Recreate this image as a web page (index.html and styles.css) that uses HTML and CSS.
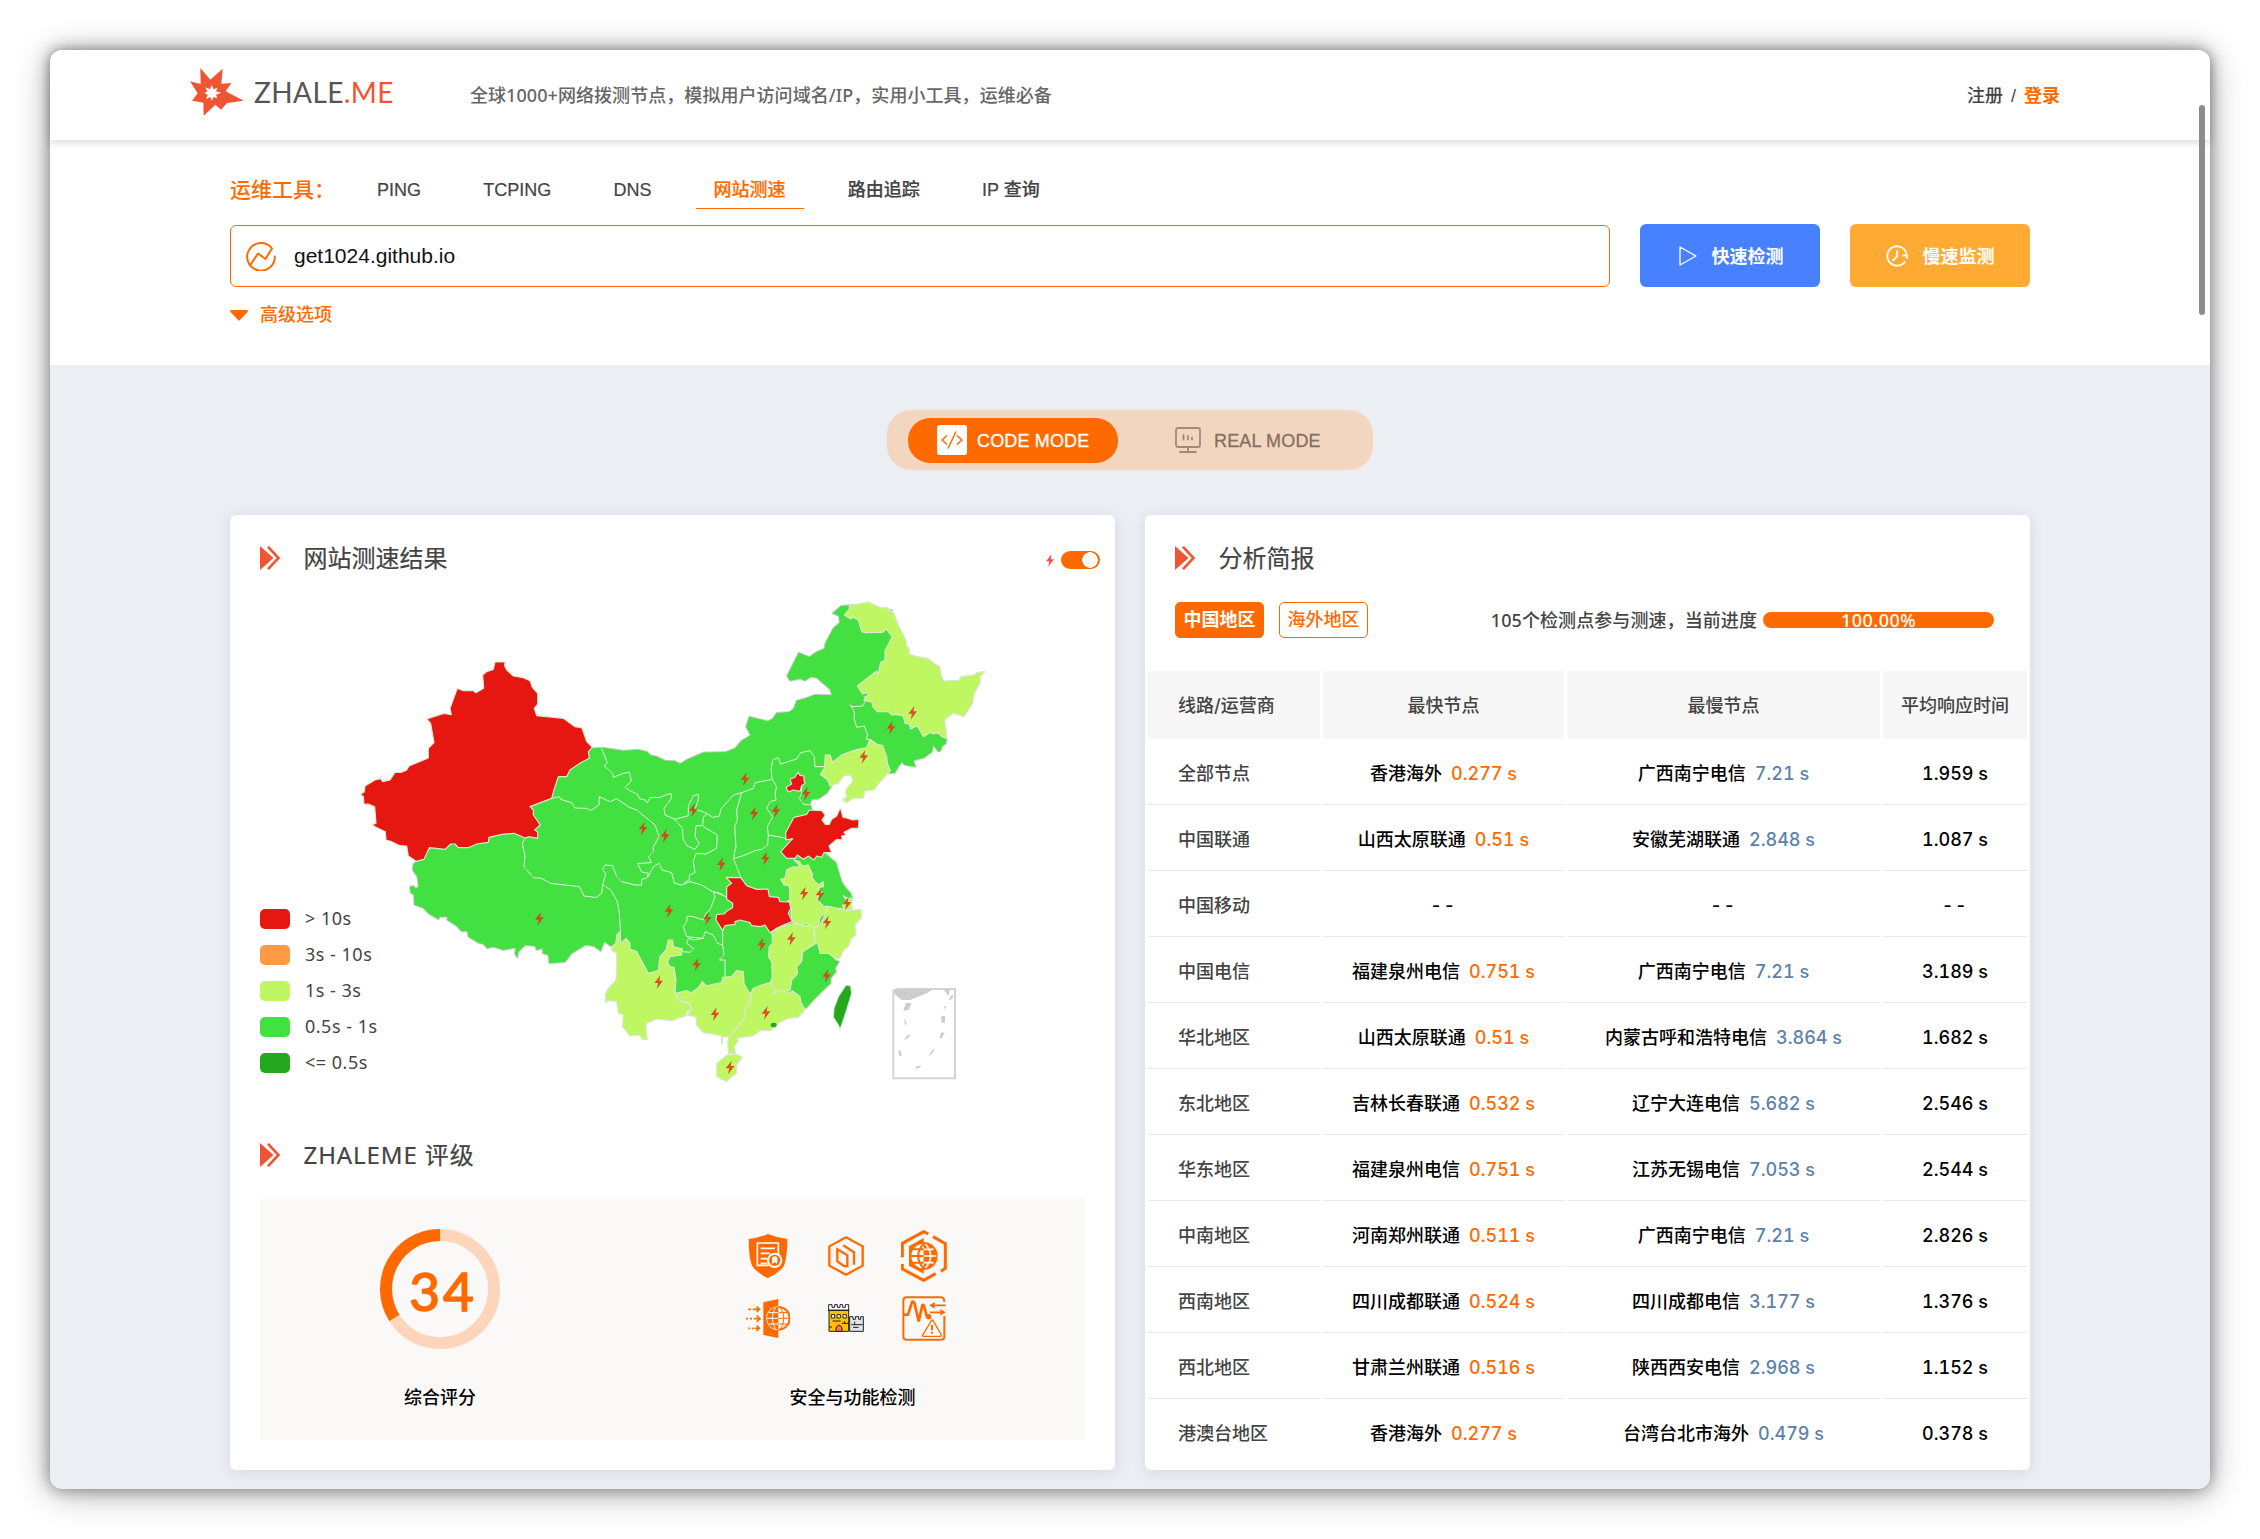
FILE: index.html
```html
<!DOCTYPE html>
<html lang="zh-CN">
<head>
<meta charset="utf-8">
<title>ZHALE.ME</title>
<link rel="stylesheet" href="styles.css">
</head>
<body>
<svg class="defs" width="0" height="0">
  <defs>
    <symbol id="chevron" viewBox="0 0 20 24"><path d="M0 0L13.500 12L0 24Z" fill="#ef5533"/><path d="M8 .8L18.500 12L8 23.200" fill="none" stroke="#ef5533" stroke-width="2.600"/></symbol>
    <path id="bolt" d="M5-20L-13 3L-2 3L-6 21L13-4L2-4Z"/>
  </defs>
</svg>
<div class="window">
  <div class="scrollbar"></div>
  <header class="header">
    <div class="logo">
      <svg width="54" height="48" viewBox="0 0 162 144"><path fill="#ef5533" fill-rule="evenodd" d="M31 0L61 35L98 2L94 47L124 45L107 70L161 98L111 105L93 125L76 110L41 143L40 104L6 98L23 76L0 40L32 48ZM65 52L60 64L46 58L52 70L43 75L53 80L48 94L61 87L65 98L71 87L82 91L78 80L94 74L78 70L83 59L71 64Z"/></svg>
      <span class="logo-text">ZHALE<b>.ME</b></span>
    </div>
    <p class="slogan">全球1000+网络拨测节点，模拟用户访问域名/IP，实用小工具，运维必备</p>
    <div class="account"><a>注册</a><i>/</i><a class="login">登录</a></div>
  </header>

  <section class="search">
    <nav class="tabs">
      <span class="tabs-label">运维工具：</span>
      <a>PING</a><a>TCPING</a><a>DNS</a><a class="on">网站测速</a><a>路由追踪</a><a>IP 查询</a>
    </nav>
    <div class="query">
      <div class="field">
        <svg width="30" height="30" viewBox="0 0 30 30" fill="none" stroke="#ff6a00" stroke-width="2" stroke-linejoin="round" stroke-linecap="round"><path d="M5 23L12 12.500L19.500 18L26 7.500A13.800 13.800 0 1 0 28.800 15.500"/></svg>
        <span>get1024.github.io</span>
      </div>
      <button class="btn fast"><svg width="18" height="20" viewBox="0 0 18 20"><path d="M1 1L17 10L1 19Z" fill="none" stroke="#fff" stroke-width="1.300" stroke-linejoin="round"/></svg><span>快速检测</span></button>
      <button class="btn slow"><svg width="22" height="22" viewBox="0 0 22 22" fill="none" stroke="#fff" stroke-width="1.800"><path d="M20.500 9A9.700 9.700 0 1 0 19 16.500"/><path d="M16.500 10.500H21V14M11 5.500V11.500L6.500 16"/></svg><span>慢速监测</span></button>
    </div>
    <div class="advanced"><svg width="18" height="11" viewBox="0 0 18 11"><path d="M1 0H17Q18.500 .5 17.500 2L10 10Q9 11 8 10L.5 2Q-.5 .5 1 0Z" fill="#ff6a00"/></svg>高级选项</div>
  </section>

  <main class="main">
    <div class="modes">
      <div class="mode on">
        <svg width="30" height="30" viewBox="0 0 30 30"><rect width="30" height="30" rx="3" fill="#fff"/><path d="M10 10.500L5 15L10 19.500M20 10.500L25 15L20 19.500M19 6.500L11 23.500" fill="none" stroke="#ff6a00" stroke-width="1.500"/></svg>
        <span>CODE MODE</span>
      </div>
      <div class="mode">
        <svg width="26" height="26" viewBox="0 0 26 26" fill="none" stroke="#a08a79" stroke-width="1.800" stroke-linecap="round"><rect x="1" y="1" width="24" height="19" rx="2"/><path d="M13 20V25M5 25H21M8.500 8V12.500M13 9V12.500M17 10.500V12.500"/></svg>
        <span>REAL MODE</span>
      </div>
    </div>

    <div class="cards">
      <section class="card">
        <div class="title"><svg width="20" height="24"><use href="#chevron"/></svg><h2>网站测速结果</h2>
          <div class="switch"><svg width="10" height="13" viewBox="-14 -21 28 43"><use href="#bolt" fill="#ff4646"/></svg><span></span></div>
        </div>
        <div class="map-area">
          <svg class="map" width="660" height="510" viewBox="0 0 1980 1530">
            <defs>
              <g id="land" stroke-linejoin="round">
                <path d="M757 505L790 503L850 512L895 509L922 516L930 526L950 530L975 542L1003 543L1020 552L1040 540L1090 518L1160 517V1050L1100 1160L1000 1120L920 1180L840 1090L815 1100L793 1085L782 1113L760 1098L737 1095L695 1120L675 1146L628 1150L625 1125L608 1120L608 1105L590 1110L585 1098L556 1095L535 1115L532 1133L525 1122L527 1103L490 1110L460 1100L442 1105L430 1092L415 1088L385 1070L382 1054L365 1054L350 1038L322 1020L322 1010L300 1010L295 1018L265 1000L250 984L223 974L222 945L212 938L210 920L220 918L228 926L236 920L232 890L218 870L220 852L232 842L300 780L500 740L600 600L740 508Z"/>
                <g transform="translate(900 0)"><path d="M-20 512L22 516L30 526L50 530L75 542L103 543L120 552L140 540L190 518L255 517L285 505L305 482L332 466L318 440L328 410L384 424L398 416L410 399L448 396L462 385L470 362L497 355L525 344L576 346L570 328L530 293L513 290L495 302L480 296L450 302L441 288L452 266L476 218L508 231L530 216L553 206L556 190L580 145L599 128L597 108L578 100L603 78L640 74L755 90L800 250L800 420L920 475L918 490L905 500L902 512L895 515L880 495L876 515L852 533L825 540L820 542L827 560L795 555L785 547L775 560L765 578L745 580L640 560L580 610L560 640L535 657L515 658L510 672L516 688L530 760L565 815L555 820L588 848L605 905L618 925L632 940L637 955L630 990L600 1050L580 1135L500 1250L0 1250Z"/></g>
                <g transform="translate(600 600)"><path d="M200 0H700L850 490L885 540L897 545L885 565L888 575L872 595L872 610L850 630L820 660L798 685L790 680L750 600L620 640L500 610L408 640L300 560L200 400Z"/></g>
              </g>
            </defs>
            <use href="#land" fill="#42e040" stroke="#cfcfcf" stroke-width="6"/>
            <use href="#land" fill="#42e040"/>
            <path class="prov red" d="M465 246H496L493 256L500 270L520 288L550 293L570 302L577 322L593 340V372L583 385L590 407L670 415L705 440L726 444L740 485L757 502L745 515L748 535L722 548L690 570L680 590L655 590L642 630L635 655L570 680L580 690V705L601 735L584 750L593 755V775L565 770L555 774L522 760L485 763L447 772L445 787L410 792L385 803H355L345 792L332 792L315 808L268 803L252 838L228 844L205 828L200 798L180 797L155 785L138 780L136 755L105 740L95 733L108 730L104 680L85 672L72 673L70 650L62 643L73 635L75 618L105 600L122 596L128 605L150 600L165 577L185 577L200 570L207 558L265 534V505L282 488L272 430L260 417L312 400L334 404L330 385L352 325L370 332H400L408 338L431 325L428 285L440 275L460 268Z"/>
            <g transform="translate(900 0)">
              <path class="prov lime" d="M628 77L685 66L725 84L738 82L762 100L775 135L798 180L800 198L808 205V222L832 230L865 235L885 252L900 260L905 290L912 303L957 300L963 290L1000 285L1012 277L1035 275L1020 290L1022 305L1002 345L998 370L985 390L972 410L940 400L914 420L918 445L920 475L905 470L895 457L880 462L872 457L850 470L832 437L812 447L808 432L795 430L790 408L770 403L755 405L745 395L712 395L698 380L696 366L672 362L675 350L685 345L683 338L668 342L652 318L710 273L714 285L722 247L735 242V212L757 170L738 147L728 157L678 158L665 155L655 120L640 112L632 117L613 105L628 88Z"/>
              <path class="prov lime" d="M541 583L553 565L556 525L570 525L578 547L605 525L630 515L655 508L680 503L690 478L710 492L728 497L740 530L742 550L751 572L735 590L715 612L702 630L675 633L670 655H640L620 668L607 660L620 650L616 632L638 603L634 585L612 587L595 610L570 618L563 600Z"/>
              <path class="prov lime" d="M462 840L478 845L487 858L505 855L518 885L516 893L525 905L536 915L550 905V920L535 922L545 940L530 958L550 978L563 980L555 1000L540 1012L535 1037L520 1045L500 1030L480 1035L457 1025L453 1000L455 985L440 965L450 960L448 918L432 915L422 898L435 895L440 870L460 860L475 862L478 855Z"/>
              <path class="prov lime" d="M563 978L590 985L600 985L625 992L663 988L665 1012L645 1035L648 1065L635 1075L625 1100L610 1112L600 1135L585 1135L565 1120L540 1120L535 1095L525 1080L522 1045L540 1035L555 1005Z"/>
              <path class="prov lime" d="M610 947L620 953L637 955L635 975L637 990L612 990L608 975L620 962Z"/>
              <path class="prov red" d="M474 576L480 586L492 588V602L496 610L485 617L480 634L460 630L445 636L438 622L455 612L450 598L465 592Z"/>
              <path class="prov red" d="M508 690L545 692L556 705L546 720L556 733L568 733L575 718L590 708L601 683L609 712L620 714L638 720L657 718L655 745H635L612 757L618 765L605 768L607 780L590 778L567 798L575 818L552 818L545 832L530 828L522 840L505 828L490 838L472 825L465 835H440L422 815L458 776L438 780L437 758L462 712L500 703Z"/>
              <path class="prov red" d="M258 892L302 893L320 917L350 928L384 927L388 950L415 952L420 965L448 966L452 985L445 1000L457 1025L430 1035L410 1045L390 1058L375 1035L362 1040L335 1037L330 1028L300 1020L285 1025V1033L255 1037L248 1052L228 1020L230 1003L252 1002L262 992L278 983V970L260 958L260 920L275 910Z"/>
            </g>
            <g transform="translate(600 600)">
              <path class="prov lime" d="M695 455L730 438L765 430L790 437L815 437L825 448L820 465L828 490L800 508L788 515L785 545L770 560L773 580L765 590L755 600L750 632L725 635L705 640L690 610L697 590L695 545L685 530L688 500L697 490V470Z"/>
              <path class="prov lime" d="M632 640L640 625L665 615L690 608L705 625L700 640L725 632L750 640L757 632L780 650L782 665L795 690L775 712L745 715L715 730L692 752L660 752L640 768L600 773L592 775L594 785L582 800L587 820L566 822L563 790L567 765L590 745L612 715L615 690L632 660Z"/>
              <path class="prov lime" d="M408 640L440 632L455 638L478 620L487 605L500 618L522 612L545 608L548 592L575 590L590 572L610 575L612 610L625 635L632 640L628 670L615 690L612 715L590 745L567 770L548 772L547 792L544 790V768L530 765L490 758L470 735L468 712L440 705L455 690L450 670L415 660Z"/>
              <path class="prov lime" d="M240 455L243 492L258 475L270 490V508L290 515L325 580L355 572L360 530L378 510L385 480L398 480L400 500L427 507L425 525L390 530L382 545L390 560L402 562L408 600L405 635L415 660L430 667L450 672L455 690L440 695L437 708L410 716L400 722L350 718L320 730L318 745L322 778H305L300 765L270 768L247 740L250 705L235 700L230 665L205 662L195 668L197 640L205 625L228 600L230 555V520L215 512L215 500L228 490L230 465Z"/>
              <path class="prov lime" d="M530 850L560 825L590 823L608 832L590 855V880L575 890L560 905L530 890Z"/>
              <path class="prov dark" d="M918 615L932 618L935 640L920 690L905 735L900 748L895 735L880 712L882 685L895 650Z"/>
              <ellipse cx="701" cy="735" rx="9" ry="7" fill="#24a81e"/>
            </g>
            <g class="lines">
              <path d="M784 505L802 548L793 558L818 580L820 592L850 580L868 577L874 603L855 622L870 632L893 643L898 656L915 660L922 668L930 653L960 652L985 642H995L993 657L972 685L975 705L1005 718L1045 707V678L1060 647L1075 643V660L1065 687L1082 693L1100 700L1118 712L1138 708L1143 687L1180 645L1205 638"/>
              <path d="M635 655L658 650L662 658L695 668L705 684L740 685L752 692L777 675L778 650L810 665L830 656L870 683L890 690L945 735L957 770L940 800L940 815L926 830L934 848L900 850L893 850L905 876L925 880L920 895L905 898V915L885 915L845 905L830 890L818 857L795 855L788 868L797 882L788 915L785 940L768 953L750 950L732 948L718 920L700 918L632 910L605 895L580 893L552 860L555 828L547 790L556 774"/>
              <path d="M790 915L812 930L832 965L838 1000L842 1060M925 890L940 860L957 850L966 870L995 878L1003 910L1025 915L1050 905L1085 915L1118 935L1140 940L1160 952"/>
              <path d="M1005 718L1027 745L1029 775L1040 797L1065 808L1078 790L1065 770L1068 737H1088L1090 712L1100 702M1090 740L1132 765L1130 805L1098 822L1068 820L1060 845L1065 878L1048 885L1048 900L1032 908"/>
              <path d="M1120 935L1125 950L1110 990L1098 1000L1090 1020L1060 1010L1042 1008L1040 1025L1030 1040L1040 1070L1090 1075L1095 1055L1120 1065L1132 1090L1148 1095V1052M1148 1095L1152 1125L1138 1140L1155 1140V1190M1090 1075L1060 1080L1045 1075L1040 1090L1060 1105L1050 1117L1028 1115"/>
            </g>
            <g class="lines" transform="translate(900 0)">
              <path d="M305 638L290 690L292 720L284 740L288 800L280 835L290 860L302 892M282 835L310 827L345 812L365 808L383 795L385 765L382 740L398 710L380 685L390 665L408 660L405 640L410 620L397 598L393 570L398 540L415 533L422 552L470 537L482 518L510 512L523 530L525 560H552"/>
              <path d="M305 638L340 625L345 608L397 598M385 765L430 773L440 778M628 375L640 380L668 378L675 365M634 378L643 398L642 415L650 442L673 438L682 462L680 478L692 480M485 615V640L478 655L490 672L510 675M222 935L258 950"/>
            </g>
            <g fill="#d93a1b" fill-opacity=".88">
              <use href="#bolt" x="909" y="745"/><use href="#bolt" x="975" y="767"/><use href="#bolt" x="1060" y="690"/><use href="#bolt" x="598" y="1016"/><use href="#bolt" x="987" y="992"/><use href="#bolt" x="1102" y="1015"/><use href="#bolt" x="1070" y="1153"/><use href="#bolt" x="1215" y="597"/><use href="#bolt" x="1242" y="700"/><use href="#bolt" x="1308" y="692"/><use href="#bolt" x="1398" y="640"/><use href="#bolt" x="1276" y="835"/><use href="#bolt" x="1144" y="852"/><use href="#bolt" x="1718" y="398"/><use href="#bolt" x="1653" y="443"/><use href="#bolt" x="1571" y="530"/><use href="#bolt" x="1392" y="940"/><use href="#bolt" x="1440" y="943"/><use href="#bolt" x="1521" y="970"/><use href="#bolt" x="1461" y="1027"/><use href="#bolt" x="1354" y="1076"/><use href="#bolt" x="1265" y="1093"/><use href="#bolt" x="1460" y="1187"/><use href="#bolt" x="956" y="1206"/><use href="#bolt" x="1125" y="1302"/><use href="#bolt" x="1278" y="1298"/><use href="#bolt" x="1170" y="1462"/>
            </g>
            <g transform="translate(600 600)" fill="#cdcdcd">
              <path d="M1060 633L1072 627H1245V895H1060Z" fill="#fff" stroke="#d4d4d4" stroke-width="6"/>
              <path d="M1063 630L1075 627H1180L1160 640L1110 660H1085L1063 642ZM1210 627H1230L1225 648ZM1098 668L1115 670L1105 690L1090 692ZM1093 715L1099 728V738L1094 730ZM1092 780L1103 765L1112 764L1100 778ZM1075 810L1083 813L1085 828L1078 828ZM1166 830L1170 818L1182 806L1184 810ZM1125 864L1134 857L1145 860L1130 866ZM1204 708H1215V728H1204ZM1198 775L1203 758L1214 757L1206 775ZM1210 690L1214 677L1220 678ZM1226 662L1232 648L1240 644L1238 655Z"/>
            </g>
          </svg>
          <ul class="legend">
            <li><i class="l1"></i>&gt; 10s</li><li><i class="l2"></i>3s - 10s</li><li><i class="l3"></i>1s - 3s</li><li><i class="l4"></i>0.5s - 1s</li><li><i class="l5"></i>&lt;= 0.5s</li>
          </ul>
        </div>
        <div class="title"><svg width="20" height="24"><use href="#chevron"/></svg><h2 class="latin">ZHALEME 评级</h2></div>
        <div class="rating">
          <div class="score">
            <svg width="120" height="120" viewBox="0 0 120 120"><circle cx="60" cy="60" r="54" fill="none" stroke="#fcd5bb" stroke-width="12"/><path d="M60 6A54 54 0 0 0 14.400 88.900" fill="none" stroke="#ff6a00" stroke-width="12"/><text x="63" y="82" text-anchor="middle" class="score-num">34</text></svg>
            <p>综合评分</p>
          </div>
          <div class="checks">
            <div class="icons">
              <svg width="40" height="44" viewBox="0 0 120 132"><path d="M60 0Q88 12 118 15Q118 70 108 95Q92 118 60 132Q28 118 12 95Q2 70 2 15Q32 12 60 0Z" fill="#ff6a00"/><path d="M62 94H28V27H91V62M38 43H81M38 58H66M38 74H58M38 88H58" fill="none" stroke="#fff" stroke-width="5"/><circle cx="80" cy="79" r="23" fill="#fff"/><circle cx="80" cy="79" r="17" fill="#ff6a00"/><path d="M80 67Q90 68 88 79L87 90L80 84L73 90L72 79Q70 68 80 67Z" fill="#fff"/></svg>
              <svg width="36" height="40" viewBox="0 0 108 120" fill="none" stroke="#ff6a00" stroke-width="7"><path d="M54 4L104 31V89L54 116L4 89V31Z"/><path d="M28 40L58 58V91L48 90L28 76ZM46 28L78 49V86"/></svg>
              <svg width="46" height="52" viewBox="0 0 138 156"><path d="M82 12L68 5L4 40V82M4 102V117L68 151L104 131M96 20L133 41V115L120 124" fill="none" stroke="#ff6a00" stroke-width="9"/><path d="M68 24L24 49V107L68 131Z" fill="#ff6a00"/><path d="M68 38A40 40 0 0 0 68 118" fill="#fff"/><path d="M68 38A40 40 0 0 0 68 118M30 78H68M36 58H68M36 98H68M68 40Q35 78 68 116" fill="none" stroke="#ff6a00" stroke-width="6"/><path d="M68 36A42 42 0 0 1 68 120" fill="#ff6a00"/><path d="M68 58H98M68 78H106M68 98H98M73 42Q105 78 73 114" fill="none" stroke="#fff" stroke-width="5"/></svg>
              <svg width="44" height="39" viewBox="0 0 132 117"><path d="M52 10L97 0V117L52 108Z" fill="#ff6a00"/><circle cx="97" cy="58" r="36" fill="#fff"/><path d="M97 24A34 34 0 0 0 97 92Z" fill="#ff6a00"/><path d="M97 24A34 34 0 0 1 97 92" fill="none" stroke="#ff6a00" stroke-width="6"/><path d="M63 58H97M68 41H97M68 75H97M88 26Q70 58 88 90" stroke="#fff" stroke-width="3" fill="none"/><path d="M97 41H126M97 58H131M97 75H126M104 26Q123 58 104 90" stroke="#ff6a00" stroke-width="3" fill="none"/><path d="M7 31H15M20 31H38M0 59H6M12 59H18M24 59H40M7 88H12M17 88H23M26 88H38M32 23L40 31L32 39M32 50L42 59L32 68M32 80L40 88L32 96" fill="none" stroke="#ff6a00" stroke-width="5"/></svg>
              <svg width="36" height="28" viewBox="0 0 108 84" stroke="#222" stroke-width="3"><path d="M2 19V2H12V10H20V2H28V10H36V2H44V10H52V2H62V19Z" fill="#fff"/><path d="M3 19H62V82H3Z" fill="#ffc000"/><path d="M65 82V38H75V46H82V38H92V46H98V38H106V82Z" fill="#dde5e8"/><path d="M10 32H20V42H10ZM27 32H37V42H27ZM45 32H55V42H45Z" fill="#fff"/><path d="M24 82V72Q33 54 42 72V82Z" fill="#ff6f61"/><path d="M0 19H64M14 51H38M42 58H62M50 51V58M3 69H12M70 62H104M75 70H92M80 53V62" fill="none"/></svg>
              <svg width="44" height="45" viewBox="0 0 132 135" fill="none" stroke="#ff6a00" stroke-width="6"><path d="M127 18Q127 4 116 4H14Q4 4 4 14V122Q4 131 14 131H117Q127 131 127 122V60"/><path d="M4 56H18L30 18Q35 14 38 24L50 76L61 28Q66 24 68 36L74 60H80" stroke-width="8"/><circle cx="80" cy="62" r="5" fill="#ff6a00"/><path d="M131 28H92M84 49H122" stroke-width="5"/><path d="M82 28L98 18V38ZM131 49L115 39V59Z" fill="#ff6a00" stroke="none"/><path d="M89 73Q91 71 93 73L118 117Q118 121 115 121H65Q61 121 62 117Z" fill="#faf9f8" stroke-width="4"/><path d="M90 87V103M90 107V113"/></svg>
            </div>
            <p>安全与功能检测</p>
          </div>
        </div>
      </section>

      <section class="card">
        <div class="title"><svg width="20" height="24"><use href="#chevron"/></svg><h2>分析简报</h2></div>
        <div class="filter">
          <a class="pill on">中国地区</a><a class="pill">海外地区</a>
          <span class="progress-label">105个检测点参与测速，当前进度</span><div class="progress">100.00%</div>
        </div>
        <div class="table">
          <div class="tr th"><div>线路/运营商</div><div>最快节点</div><div>最慢节点</div><div>平均响应时间</div></div>
          <div class="tr"><div>全部节点</div><div>香港海外<b>0.277 s</b></div><div>广西南宁电信<em>7.21 s</em></div><div>1.959 s</div></div>
          <div class="tr"><div>中国联通</div><div>山西太原联通<b>0.51 s</b></div><div>安徽芜湖联通<em>2.848 s</em></div><div>1.087 s</div></div>
          <div class="tr none"><div>中国移动</div><div>--</div><div>--</div><div>--</div></div>
          <div class="tr"><div>中国电信</div><div>福建泉州电信<b>0.751 s</b></div><div>广西南宁电信<em>7.21 s</em></div><div>3.189 s</div></div>
          <div class="tr"><div>华北地区</div><div>山西太原联通<b>0.51 s</b></div><div>内蒙古呼和浩特电信<em>3.864 s</em></div><div>1.682 s</div></div>
          <div class="tr"><div>东北地区</div><div>吉林长春联通<b>0.532 s</b></div><div>辽宁大连电信<em>5.682 s</em></div><div>2.546 s</div></div>
          <div class="tr"><div>华东地区</div><div>福建泉州电信<b>0.751 s</b></div><div>江苏无锡电信<em>7.053 s</em></div><div>2.544 s</div></div>
          <div class="tr"><div>中南地区</div><div>河南郑州联通<b>0.511 s</b></div><div>广西南宁电信<em>7.21 s</em></div><div>2.826 s</div></div>
          <div class="tr"><div>西南地区</div><div>四川成都联通<b>0.524 s</b></div><div>四川成都电信<em>3.177 s</em></div><div>1.376 s</div></div>
          <div class="tr"><div>西北地区</div><div>甘肃兰州联通<b>0.516 s</b></div><div>陕西西安电信<em>2.968 s</em></div><div>1.152 s</div></div>
          <div class="tr"><div>港澳台地区</div><div>香港海外<b>0.277 s</b></div><div>台湾台北市海外<em>0.479 s</em></div><div>0.378 s</div></div>
        </div>
      </section>
    </div>
  </main>
</div>
</body>
</html>
```
FILE: styles.css
```css
* { box-sizing: border-box; margin: 0; padding: 0; }
body {
  width: 2260px;
  height: 1539px;
  padding: 50px;
  background: #fff;
  overflow: hidden;
  font: 500 18px/26px "Liberation Sans", "Noto Sans CJK SC", sans-serif;
  color: #444;
}
.defs { position: absolute; }
svg { display: block; flex: none; }
i, em { font-style: normal; }
.window {
  position: relative;
  width: 2160px;
  height: 1439px;
  border-radius: 12px;
  background: #ebeef3;
  box-shadow: 0 0 16px rgba(0, 0, 10, .42), 0 4px 36px rgba(0, 0, 0, .3);
}
.scrollbar {
  position: absolute;
  right: 5px;
  top: 55px;
  width: 6px;
  height: 210px;
  border-radius: 3px;
  background: #8c8c8c;
  z-index: 5;
}
.header {
  position: relative;
  display: flex;
  align-items: center;
  height: 90px;
  padding: 0 150px 0 140px;
  border-radius: 12px 12px 0 0;
  background: #fff;
  box-shadow: 0 2px 8px rgba(0, 0, 0, .16);
}
.logo { display: flex; width: 280px; gap: 10px; margin-top: -6px; align-items: center; }
.logo-text { font: 400 28px/40px Lato, sans-serif; letter-spacing: .4px; color: #555; }
.logo-text b { font-weight: 400; color: #ef5533; }
.slogan { flex: 1; color: #666; font-family: "Noto Sans", "Noto Sans CJK SC", sans-serif; letter-spacing: .06px; }
.account { display: flex; gap: 6px; padding-top: 2px; }
.account i { width: 9px; text-align: center; }
.login { color: #ff6a00; font-weight: 700; }

.search { height: 225px; padding: 32px 180px 0; background: #fff; }
.tabs { display: flex; gap: 26.2px; height: 38px; }
.tabs a { height: 37px; padding: 5px 18px 0; -webkit-text-stroke: .2px; }
.tabs .on { color: #ff6a00; border-bottom: 1px solid #ff6a00; }
.tabs-label { width: 102.800px; font-size: 21px; line-height: 35px; color: #ff6a00; white-space: nowrap; }
.query { display: flex; gap: 30px; margin-top: 14px; height: 63px; align-items: flex-end; }
.field {
  flex: 1;
  display: flex;
  align-items: center;
  gap: 18px;
  height: 62px;
  padding-left: 15px;
  border: 1px solid #ff6a00;
  border-radius: 6px;
  font: 400 21px/30px "Liberation Sans", sans-serif;
  color: #111;
}
.btn {
  display: flex;
  align-items: center;
  justify-content: center;
  gap: 15px;
  width: 180px;
  height: 63px;
  border: 0;
  border-radius: 6px;
  font: 700 18px/26px "Noto Sans CJK SC", sans-serif;
  color: #fff;
}
.btn span { padding-bottom: 2px; }
.fast { background: #4781ff; padding-left: 2px; }
.slow { background: #ffaa33; }
.advanced { display: flex; align-items: center; gap: 12px; margin-top: 15px; color: #ff6a00; }

.main { padding: 45px 180px 0; }
.modes {
  display: flex;
  align-items: center;
  width: 486px;
  height: 60px;
  margin: 0 auto;
  padding: 0 21px;
  border-radius: 24px;
  background: #f3d6c0;
}
.mode { display: flex; align-items: center; gap: 13px; height: 45px; padding-left: 57px; color: #857060; }
.mode span { padding-top: 1px; letter-spacing: .15px; -webkit-text-stroke: .3px; }
.mode.on { width: 210px; gap: 10px; padding-left: 29px; border-radius: 22px; background: #ff6a00; color: #fff; }

.cards { display: flex; gap: 30px; margin-top: 45px; }
.card { width: 885px; height: 955px; padding-top: 28px; border-radius: 6px; background: #fff; box-shadow: 0 2px 14px rgba(60, 80, 100, .12); }
.title { display: flex; align-items: center; height: 30px; padding: 0 15px 0 30px; gap: 23.500px; }
.title h2 { flex: 1; font: 400 24px/30px "Noto Sans CJK SC", sans-serif; color: #444; padding-bottom: 2px; -webkit-text-stroke: .2px; }
.title .latin { font-family: "Noto Sans", "Noto Sans CJK SC", sans-serif; letter-spacing: .9px; padding-bottom: 0; }
.switch { display: flex; align-items: center; gap: 6px; padding-top: 4px; }
.switch span { width: 39px; height: 18px; border-radius: 9px; background: radial-gradient(circle at 29px 9px, #fff 7.500px, #ff6a00 8px); }
.map-area { display: grid; height: 567px; }
.map { grid-area: 1 / 1; margin: 7px 0 0 110px; }
.legend { grid-area: 1 / 1; margin: 327px 0 0 30px; list-style: none; }
.legend li { display: flex; align-items: center; gap: 15px; height: 36px; font: 400 18px/26px "Noto Sans", sans-serif; letter-spacing: .5px; }
.legend i { width: 30px; height: 20px; margin-top: 2px; border-radius: 5px; }
.l1, .red { background: #e61610; fill: #e61610; }
.l2 { background: #ff9945; }
.l3, .lime { background: #bff763; fill: #bff763; }
.l4 { background: #42e040; }
.l5, .dark { background: #24a81e; fill: #24a81e; }
.prov { stroke: #dde6d5; stroke-width: 3.500; stroke-linejoin: round; }
.lines { fill: none; stroke: #dff5dc; stroke-width: 3; stroke-linejoin: round; }

.rating { display: flex; height: 241px; margin: 29px 30px 0; background: #faf9f8; }
.rating p { color: #000; text-align: center; }
.score { width: 360px; padding-top: 30px; }
.score svg { margin: 0 auto 36px; }
.score-num { font: 400 53px Lato, sans-serif; letter-spacing: 3px; fill: #ff6a00; stroke: #ff6a00; stroke-width: 1.600px; }
.checks { width: 465px; padding-top: 26px; }
.icons { display: grid; grid-template-columns: repeat(3, 78px); grid-template-rows: 62px 62px; place-items: center; padding-left: 109px; margin-bottom: 36px; }

.filter { display: flex; align-items: center; height: 36px; margin-top: 29px; padding: 0 36px 0 30px; }
.pill { width: 89px; height: 36px; margin-right: 15px; border: 1px solid #ff6a00; border-radius: 5px; line-height: 35px; text-align: center; color: #ff6a00; }
.pill.on { background: #ff6a00; color: #fff; font-weight: 700; }
.progress-label { margin-left: auto; margin-right: 6px; font-family: "Noto Sans", "Noto Sans CJK SC", sans-serif; letter-spacing: .08px; }
.progress { width: 231px; height: 16px; border-radius: 8px; background: #ff6a00; color: #fff; font: 500 18px/17px "Noto Sans", sans-serif; letter-spacing: .5px; text-align: center; }
.table { margin: 33px 3px 0; }
.tr { display: grid; grid-template-columns: 172px 241px 313px 144px; gap: 3px; height: 66px; }
.tr div { display: flex; align-items: center; justify-content: center; border-bottom: 1px solid #e8e8e8; color: #000; padding-top: 4px; font-family: Inter, "Noto Sans CJK SC", sans-serif; font-variant-numeric: tabular-nums; }
.tr div:first-child { justify-content: flex-start; padding-left: 30px; color: #444; }
.tr:last-child div { border: 0; }
.tr b { margin-left: 9px; font-weight: 500; color: #ff6a00; }
.tr em { margin-left: 9px; color: #5b82a8; }
.none div + div { letter-spacing: 1.500px; }
.th { height: 68px; }
.th div { padding-top: 1px; border: 0; background: #f7f7f7; color: #444; }
```
